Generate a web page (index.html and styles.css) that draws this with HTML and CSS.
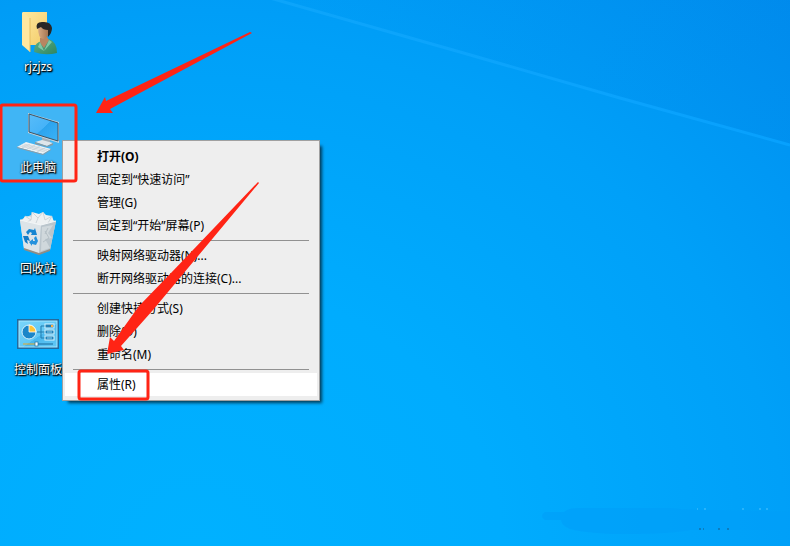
FILE: index.html
```html
<!DOCTYPE html>
<html lang="zh-CN">
<head>
<meta charset="utf-8">
<meta name="viewport" content="width=device-width, initial-scale=1">
<title>桌面</title>
<link rel="stylesheet" href="styles.css">
</head>
<body>
<main class="desktop">
  <svg class="wallpaper" viewBox="0 0 790 546" preserveAspectRatio="none" aria-hidden="true">
    <defs>
      <linearGradient id="shade" x1="280" y1="0" x2="790" y2="0" gradientUnits="userSpaceOnUse">
        <stop offset="0" stop-color="#0070d8" stop-opacity="0"/>
        <stop offset="1" stop-color="#0070d8" stop-opacity=".12"/>
      </linearGradient>
      <linearGradient id="beam" x1="270" y1="0" x2="790" y2="0" gradientUnits="userSpaceOnUse">
        <stop offset="0" stop-color="#18acff" stop-opacity=".5"/>
        <stop offset="1" stop-color="#08a2ff" stop-opacity=".9"/>
      </linearGradient>
    </defs>
    <path d="M276 0L460 52L790 145V0Z" fill="url(#shade)"/>
    <path d="M270-2L460 52L620 98L790 145" fill="none" stroke="url(#beam)" stroke-width="3"/>
    <path d="M545 512H564Q568 508 578 508H670Q690 510 715 510L790 512V530L690 530Q670 534 625 534Q590 534 570 529Q562 526 561 520H545Q539 516 545 512Z" fill="#009ff8" fill-opacity=".6"/>
    <path d="M697 509h1M704 509h2M742 509h2M759 509h2M766 509h2" stroke="#4fc4ff"/>
    <path d="M699 529h2M703 529h1M718 529h2M727 529h2" stroke="#155a88"/>
  </svg>

  <nav class="shortcuts" aria-label="桌面图标">
    <button class="shortcut" type="button">
      <svg class="icon" viewBox="0 0 48 48" aria-hidden="true">
        <defs>
          <linearGradient id="folder" x1="0" y1="0" x2="1" y2="1"><stop stop-color="#ffeaa0"/><stop offset="1" stop-color="#f3cb68"/></linearGradient>
          <linearGradient id="shirt" x1="0" y1="0" x2="1" y2="1"><stop stop-color="#5bb08a"/><stop offset="1" stop-color="#2f8560"/></linearGradient>
          <linearGradient id="face" x1="0" y1="0" x2="1" y2="0"><stop stop-color="#d9ab82"/><stop offset="1" stop-color="#9c6c49"/></linearGradient>
        </defs>
        <path d="M9 4H33V37H16L8 29Z" fill="url(#folder)"/>
        <path d="M8 4L16 10V44L8 37Z" fill="#ffe7a0"/>
        <path d="M16 10V44" stroke="#e5bd60"/>
        <path d="M20 44Q20 36 25 34L35 31Q43 34 43 45Q31 48 20 44Z" fill="url(#shirt)"/>
        <path d="M26 30V35L30 40L35 32L32 27Z" fill="#b88561"/>
        <path d="M26 34L30 43L24 39ZM35 32L38 34L30 43Z" fill="#80c8a5"/>
        <path d="M24 18Q24 31 29 31Q35 31 36 19L30 15Z" fill="url(#face)"/>
        <path d="M23 21Q21 14 28 14Q37 13 38 20Q38 25 34 29V22Q29 22 27 19Q25 20 23 21Z" fill="#292725"/>
      </svg>
      <span class="name">rjzjzs</span>
    </button>
    <button class="shortcut selected" type="button">
      <svg class="icon" viewBox="0 0 48 48" aria-hidden="true">
        <defs>
          <linearGradient id="screen" x1="0" y1="0" x2="1" y2="1"><stop stop-color="#58bcf9"/><stop offset=".5" stop-color="#46b3f8"/><stop offset=".51" stop-color="#2ca4ee"/><stop offset="1" stop-color="#3ab2f8"/></linearGradient>
        </defs>
        <path d="M28 27L36 30V34H28Z" fill="#a5b0b8"/>
        <path d="M21 33L28 31L39 34L33 37Z" fill="#dfe6ea"/>
        <path d="M21 33L33 37L39 34V36L33 38L21 35Z" fill="#8b999f"/>
        <path d="M14 4L45 13V34L14 24Z" fill="#c4d5df"/>
        <path d="M15 5L44 14V32L15 23Z" fill="url(#screen)" stroke="#3f5362"/>
        <path d="M3 38L12 33L37 40L29 45Z" fill="#eef2f4"/>
        <path d="M3 38L29 45L37 40V41L29 46L3 39Z" fill="#8e9da6"/>
        <path d="M6 37L31 43M8 36L33 42M10 35L35 41M8 39L16 35M13 40L21 36M18 41L26 37M23 43L31 39" stroke="#b4c0c8" stroke-width=".5"/>
      </svg>
      <span class="name">此电脑</span>
    </button>
    <button class="shortcut" type="button">
      <svg class="icon" viewBox="0 0 48 48" aria-hidden="true">
        <path d="M6 10L17 5L42 11L36 40L25 44L10 39Z" fill="#cfd9df"/>
        <path d="M8 11L11 6L17 7L18 2L25 4L29 2L32 5L38 6L40 12L33 16L25 15L17 14Z" fill="#eef1f2"/>
        <path d="M11 6L17 10L18 2L24 8L29 2L31 10L38 6L34 13M17 10L13 12M24 8L22 13" fill="none" stroke="#c5ced3" stroke-width=".8"/>
        <path d="M6 10L27 15L25 44L10 39Z" fill="#dde4e8"/>
        <path d="M27 15L42 11L36 40L25 44Z" fill="#bac5cc"/>
        <path d="M28 17L39 15L34 23L38 28L31 29L36 38L27 41Z" fill="#d0d8dc"/>
        <path d="M31 21L35 28L29 32M34 18L31 24" fill="none" stroke="#b4bfc5"/>
        <path d="M6 10L27 15L42 11" fill="none" stroke="#f3f6f7"/>
        <path d="M10 38L25 43L36 39V41L25 45L10 40Z" fill="#8f8d85"/>
        <path d="M12 22L15 19L20 20L21 18L23 25L17 25L18 23L16 22L14 25Z" fill="#1685d1"/>
        <path d="M9 26L14 26L16 31L13 30L14 34L11 32Z" fill="#147bc6"/>
        <path d="M22 26L24 31L22 35L18 34V36L15 32L19 29V31L21 31L20 28Z" fill="#2592dd"/>
      </svg>
      <span class="name">回收站</span>
    </button>
    <button class="shortcut" type="button">
      <svg class="icon" viewBox="0 0 48 48" aria-hidden="true">
        <defs>
          <linearGradient id="panel" x1="0" y1="0" x2="1" y2="1"><stop stop-color="#79d5fa"/><stop offset=".55" stop-color="#62c8f5"/><stop offset=".56" stop-color="#49b7ed"/><stop offset="1" stop-color="#62c9f5"/></linearGradient>
        </defs>
        <rect x="3" y="8" width="42" height="30" fill="#236a9d"/>
        <rect x="5" y="10" width="38" height="26" fill="url(#panel)" stroke="#a6e7ff"/>
        <circle cx="15" cy="21" r="7" fill="#1b86c8" stroke="#d8f2fc"/>
        <path d="M15 21V14A7 7 0 0 1 22 21Z" fill="#ffc437" stroke="#fff" stroke-width=".8"/>
        <path d="M23 21H27V15H31M27 21H31M27 21V27H31" fill="none" stroke="#217caf"/>
        <g fill="#217fb5" stroke="#d9f5ff"><rect x="31" y="13" width="9" height="4"/><rect x="31" y="19" width="9" height="4"/><rect x="31" y="25" width="9" height="4"/></g>
        <path d="M37 15h2" stroke="#ffad3b" stroke-width="2"/>
        <path d="M33 21h5M33 27h5" stroke="#8ed6f4"/>
        <path d="M9 33H24" stroke="#e6a829"/><path d="M24 33H39" stroke="#18699a"/>
        <rect x="21" y="31" width="3" height="4" fill="#fff" stroke="#206f9d" stroke-width=".7"/>
      </svg>
      <span class="name">控制面板</span>
    </button>
  </nav>

  <div class="menu" role="menu" aria-label="此电脑">
    <button class="item default" type="button" role="menuitem">打开(O)</button>
    <button class="item" type="button" role="menuitem">固定到“快速访问”</button>
    <button class="item" type="button" role="menuitem">管理(G)</button>
    <button class="item" type="button" role="menuitem">固定到“开始”屏幕(P)</button>
    <hr class="divider">
    <button class="item" type="button" role="menuitem">映射网络驱动器(N)...</button>
    <button class="item" type="button" role="menuitem">断开网络驱动器的连接(C)...</button>
    <hr class="divider">
    <button class="item" type="button" role="menuitem">创建快捷方式(S)</button>
    <button class="item" type="button" role="menuitem">删除(D)</button>
    <button class="item" type="button" role="menuitem">重命名(M)</button>
    <hr class="divider">
    <button class="item active" type="button" role="menuitem">属性(R)</button>
  </div>

  <svg class="marks" viewBox="0 0 320 410" aria-hidden="true">
    <g fill="none" stroke="#ff2415" stroke-width="3">
      <rect x="1" y="105" width="75" height="76" rx="2"/>
      <rect x="79" y="371" width="69" height="28" rx="2"/>
    </g>
    <g fill="#ff2415">
      <path d="M250 32L252 33L110 109L113 113L96 113L105 97L106 101Z"/>
      <path d="M258 182L259 183L183 274L153 310L121 346L124 350L107 354L110 337L114 341L139 306L171 273Z"/>
    </g>
  </svg>
</main>
</body>
</html>
```
FILE: styles.css
```css
* {
  box-sizing: border-box;
}

body {
  margin: 0;
  font: 12px/16px "Noto Sans", "Noto Sans CJK SC", sans-serif;
}

button {
  border: 0;
  padding: 0;
  background: none;
  color: inherit;
  font: inherit;
}

.desktop {
  position: relative;
  min-height: 100vh;
  overflow: hidden;
  background: radial-gradient(ellipse 120% 150% at 25% 100%, #00b1ff 0%, #00acfe 32%, #00a0f8 62%, #008eef 92%);
}

.wallpaper {
  position: absolute;
  inset: 0;
  width: 100%;
  height: 100%;
}

.shortcuts {
  position: relative;
  display: flex;
  flex-direction: column;
  align-items: flex-start;
  gap: 25px;
  padding-top: 4px;
}

.shortcut {
  display: flex;
  flex-direction: column;
  align-items: center;
  gap: 3px;
  width: 76px;
  height: 76px;
  padding-top: 4px;
}

.selected {
  background: #40b5f5;
}

.icon {
  width: 48px;
  height: 48px;
}

.name {
  color: #fff;
  white-space: nowrap;
  text-shadow: 1px 1px 1px #000, 1px 1px 2px #000, 0 0 2px #000;
}

.menu {
  position: absolute;
  top: 140px;
  left: 62px;
  display: flex;
  flex-direction: column;
  min-width: 258px;
  padding: 4px 2px;
  border: 1px solid #a0a0a0;
  background: #eee;
  color: #000;
  box-shadow: 4px 4px 3px -2px rgb(0 0 0 / 65%);
}

.item {
  height: 23px;
  padding: 0 32px;
  text-align: left;
  white-space: nowrap;
}

.default {
  font-weight: 700;
}

.active {
  background: #fff;
}

.divider {
  width: auto;
  height: 1px;
  margin: 3px 8px;
  border: 0;
  background: #919191;
}

.marks {
  position: absolute;
  top: 0;
  left: 0;
  width: 320px;
  height: 410px;
  pointer-events: none;
}
```
